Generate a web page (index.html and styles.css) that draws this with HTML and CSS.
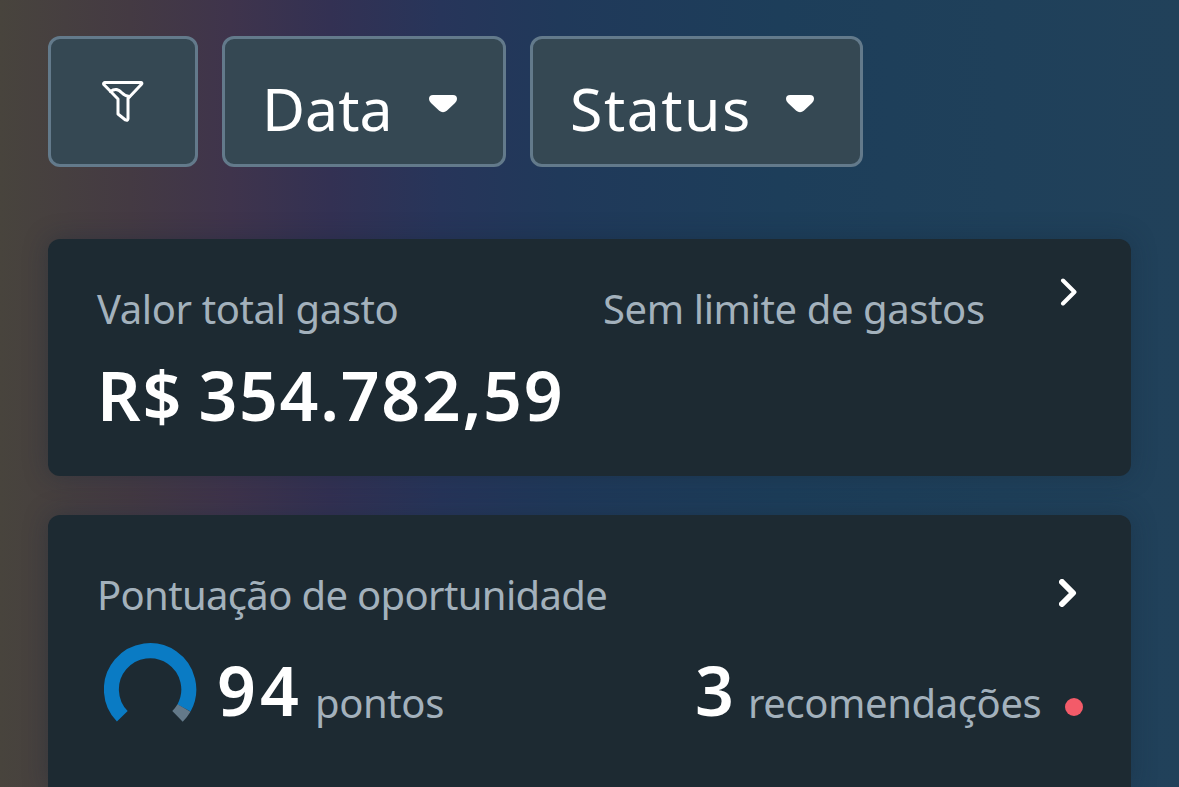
FILE: index.html
```html
<!DOCTYPE html>
<html lang="pt-BR">

<head>
  <meta charset="utf-8">
  <meta name="viewport" content="width=device-width, initial-scale=1">
  <title>Resumo</title>
  <link rel="stylesheet" href="styles.css">
</head>

<body>
  <div class="toolbar">
    <button class="filter filter-icon" aria-label="Filtrar">
      <svg width="42" height="42" viewBox="0 0 42 42">
        <path d="M3 1.5H39Q40.500 1.800 39.500 3.200L26 17.500V38Q25.500 40 23.500 39L16 33V18L1.800 3.500Q1 2 3 1.500Z" />
        <path d="M8.500 10.500C13 7 17 8.500 19.500 11.500C22 14 24 15.500 27.500 15.500" />
      </svg>
    </button>
    <button class="filter filter-data">
      <span class="filter-text">Data</span>
      <svg class="caret" width="28" height="18" viewBox="0 0 28 18"><path d="M4 0H24Q28 0 28 4Q28 6 26 8L18 15.500Q14 19 10 15.500L2 8Q0 6 0 4Q0 0 4 0Z" /></svg>
    </button>
    <button class="filter filter-status">
      <span class="filter-text">Status</span>
      <svg class="caret" width="28" height="18" viewBox="0 0 28 18"><path d="M4 0H24Q28 0 28 4Q28 6 26 8L18 15.500Q14 19 10 15.500L2 8Q0 6 0 4Q0 0 4 0Z" /></svg>
    </button>
  </div>

  <div class="card card-spend">
    <div class="card-head">
      <span class="label label-total">Valor total gasto</span>
      <span class="label label-limit">Sem limite de gastos</span>
      <svg class="chevron" width="18" height="28" viewBox="0 0 18 28"><path d="M3 2.500L14.500 14L3 25.500" /></svg>
    </div>
    <div class="amount">R$ 354.782,59</div>
  </div>

  <div class="card card-score">
    <div class="card-head">
      <span class="label label-score">Pontuação de oportunidade</span>
      <svg class="chevron chevron-bold" width="18" height="28" viewBox="0 0 18 28"><path d="M3 3L14 14L3 25" /></svg>
    </div>
    <div class="score-row">
      <svg class="gauge" width="93" height="80" viewBox="0 0 93 80">
        <path class="gauge-fill" d="M18.300 73.300A38.700 38.700 0 1 1 80 65" />
        <path class="gauge-rest" d="M80 65A38.700 38.700 0 0 1 73.500 73.300" />
      </svg>
      <span class="number number-score">94</span>
      <span class="label unit label-points">pontos</span>
      <span class="number number-rec">3</span>
      <span class="label unit label-rec">recomendações</span>
      <span class="dot"></span>
    </div>
  </div>
</body>

</html>
```

FILE: styles.css
```css
* {
  box-sizing: border-box;
}

body {
  margin: 0;
  height: 787px;
  padding: 36px 48px 0;
  overflow: hidden;
  font-family: "Noto Sans", sans-serif;
  background: linear-gradient(90deg, #48443d 0, #443a43 130px, #3f344c 230px, #333153 330px, #27355a 440px, #20395a 560px, #1d3e5a 780px, #1f405a 1000px, #21415a 1179px);
}

.toolbar {
  display: flex;
  gap: 24px;
  height: 131px;
  margin-bottom: 72px;
}

.filter {
  display: flex;
  align-items: center;
  padding: 0 0 0 37px;
  border: 3px solid #637a8b;
  border-radius: 12px;
  background: #354853;
  color: #fff;
  font-family: inherit;
  font-size: 59px;
  text-align: left;
}

.filter-icon {
  width: 150px;
  padding: 0;
  justify-content: center;
}

.filter-icon path {
  fill: none;
  stroke: #fff;
  stroke-width: 3;
  stroke-linecap: round;
  stroke-linejoin: round;
}

.filter-data {
  width: 284px;
}

.filter-status {
  width: 333px;
}

.filter-text {
  line-height: 80px;
  margin-top: 12px;
  white-space: nowrap;
}

.filter-data .filter-text {
  width: 167px;
}

.filter-status .filter-text {
  width: 216px;
  letter-spacing: 1.5px;
}

.caret {
  flex: none;
  margin-top: 5px;
  fill: #fff;
}

.card {
  padding: 44px 48px 0;
  border-radius: 12px;
  background: #1d2a32;
  box-shadow: 0 0 24px rgba(20, 36, 54, .35);
}

.card-spend {
  height: 237px;
  margin-bottom: 39px;
}

.card-score {
  height: 272px;
  padding-top: 54px;
  border-radius: 12px 12px 0 0;
}

.card-head {
  display: flex;
  height: 48px;
}

.label {
  padding: 2px 0 0 1px;
  color: #a3b1bc;
  font-size: 40px;
  line-height: 48px;
  letter-spacing: -.4px;
  white-space: nowrap;
}

.label-total {
  width: 506px;
}

.label-score {
  letter-spacing: -.65px;
}

.chevron {
  margin: -5px 5px 0 auto;
  fill: none;
  stroke: #fff;
  stroke-width: 4;
  stroke-linecap: round;
  stroke-linejoin: round;
}

.chevron-bold {
  margin: 10px 6px 0 auto;
  stroke-width: 6;
}

.amount {
  margin-top: 24px;
  padding-left: 1px;
  color: #fff;
  font-size: 68px;
  font-weight: 600;
  line-height: 80px;
  letter-spacing: 1.7px;
  word-spacing: -4px;
  white-space: nowrap;
}

.score-row {
  display: flex;
  height: 100px;
  padding: 26px 0 0 8px;
}

.gauge {
  flex: none;
}

.gauge path {
  fill: none;
  stroke-width: 15;
}

.gauge .gauge-fill {
  stroke: #0a7bc4;
}

.gauge .gauge-rest {
  stroke: #647989;
}

.number {
  flex: none;
  margin-top: 7px;
  color: #fff;
  font-size: 68px;
  font-weight: 600;
  line-height: 80px;
}

.number-score {
  width: 99px;
  padding-left: 20px;
  letter-spacing: 4px;
}

.number-rec {
  width: 52px;
  margin-left: 251px;
}

.unit {
  flex: none;
  margin-top: 34px;
}

.label-points {
  width: 130px;
  margin-left: 18px;
}

.label-rec {
  width: 293px;
}

.dot {
  flex: none;
  width: 18px;
  height: 18px;
  margin: 55px 0 0 25px;
  border-radius: 50%;
  background: #f35b69;
}
```
